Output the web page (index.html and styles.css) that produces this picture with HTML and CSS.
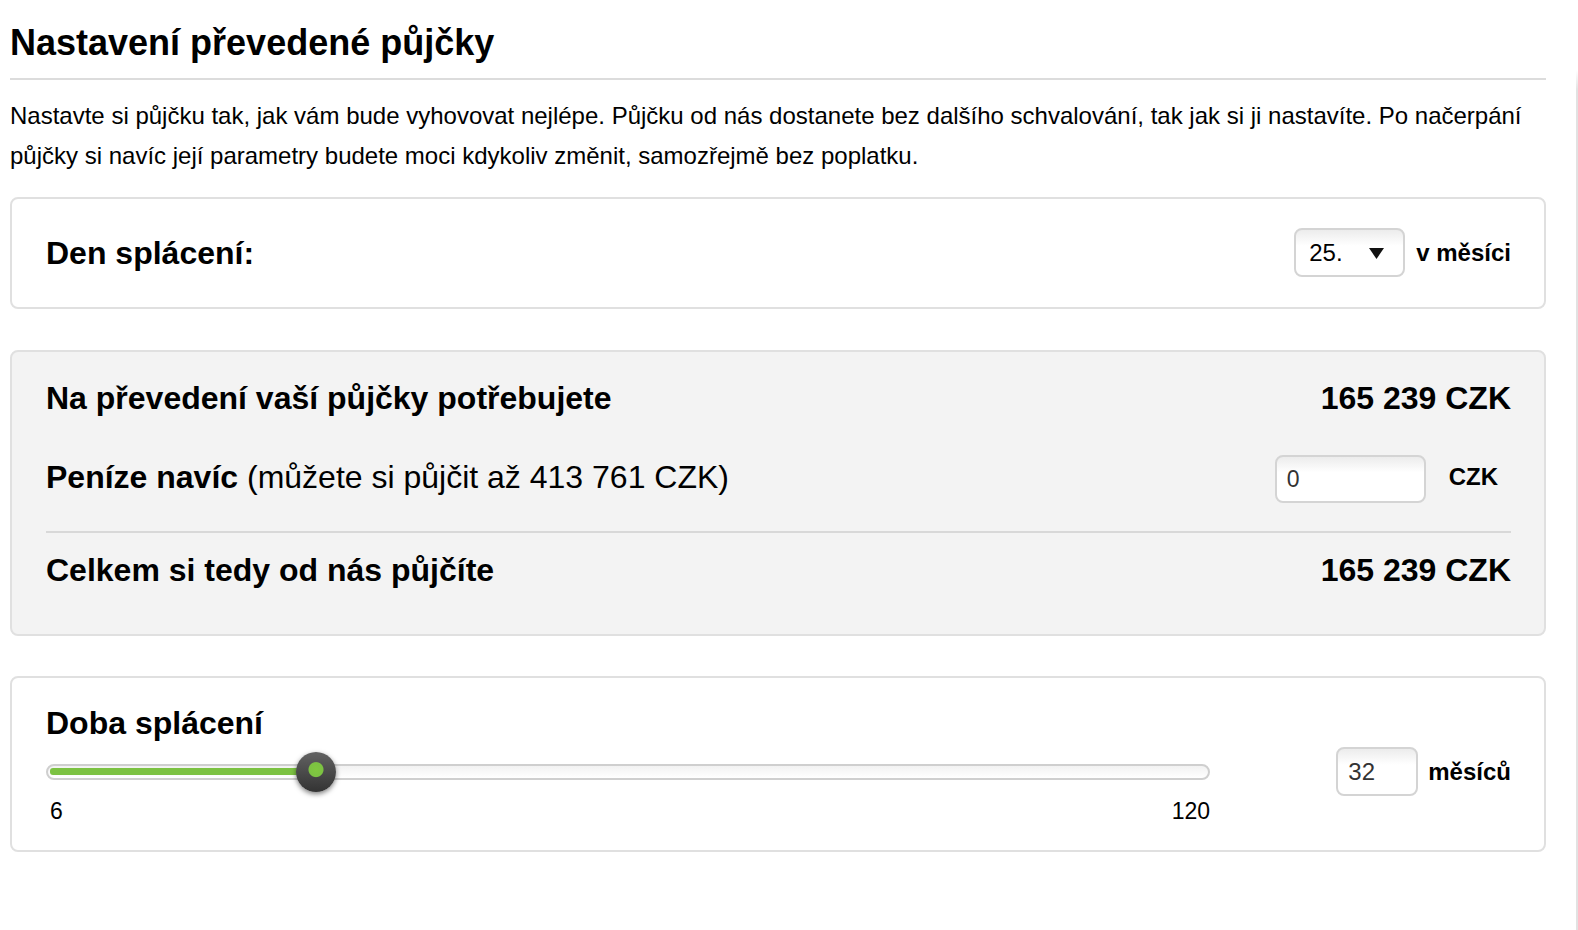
FILE: index.html
```html
<!DOCTYPE html>
<html lang="cs">
<head>
    <meta charset="UTF-8">
    <meta name="viewport" content="width=device-width, initial-scale=1.0">
    <title>Nastavení převedené půjčky</title>
    <link rel="stylesheet" href="styles.css">
</head>
<body>
    <div class="page">
        <main class="content">
            <h1 class="page-title">Nastavení převedené půjčky</h1>
            <p class="intro">Nastavte si půjčku tak, jak vám bude vyhovovat nejlépe. Půjčku od nás dostanete bez dalšího schvalování, tak jak si ji nastavíte. Po načerpání půjčky si navíc její parametry budete moci kdykoliv změnit, samozřejmě bez poplatku.</p>

            <section class="card card-day">
                <div class="row">
                    <span class="label">Den splácení:</span>
                    <div class="pick">
                        <div class="select">
                            <span>25.</span>
                            <svg width="15" height="11" viewBox="0 0 15 11"><path d="M0 0 H15 L7.5 11 Z" fill="#111"/></svg>
                        </div>
                        <span class="unit">v měsíci</span>
                    </div>
                </div>
            </section>

            <section class="card card-sum">
                <div class="row row-need">
                    <span class="label">Na převedení vaší půjčky potřebujete</span>
                    <span class="label">165 239 CZK</span>
                </div>
                <div class="row row-extra">
                    <span class="label">Peníze navíc <span class="note">(můžete si půjčit až 413 761 CZK)</span></span>
                    <div class="pick">
                        <input class="field field-money" type="text" value="0">
                        <span class="unit unit-czk">CZK</span>
                    </div>
                </div>
                <div class="row row-total">
                    <span class="label">Celkem si tedy od nás půjčíte</span>
                    <span class="label">165 239 CZK</span>
                </div>
            </section>

            <section class="card card-term">
                <h2 class="label term-title">Doba splácení</h2>
                <div class="term-row">
                    <div class="slider">
                        <div class="track-wrap">
                            <div class="track">
                                <div class="fill" style="width: 22.8%;"></div>
                                <div class="thumb" style="left: 23.1%;"></div>
                            </div>
                        </div>
                        <div class="scale">
                            <span>6</span>
                            <span>120</span>
                        </div>
                    </div>
                    <div class="pick term-pick">
                        <input class="field field-term" type="text" value="32">
                        <span class="unit">měsíců</span>
                    </div>
                </div>
            </section>
        </main>
        <div class="edge"></div>
    </div>
</body>
</html>
```

FILE: styles.css
```css
body {
    font-family: 'Liberation Sans', Arial, sans-serif;
    margin: 0;
    padding: 0;
    background-color: #fff;
    color: #000;
}

.page {
    display: flex;
    min-height: 930px;
}

.content {
    width: 1536px;
    margin-left: 10px;
}

.edge {
    margin-left: auto;
    margin-top: 70px;
    width: 2px;
    background: linear-gradient(#fff, #e2e2e2 20px);
}

.page-title {
    margin: 0;
    padding: 23px 0 15px;
    font-size: 36px;
    line-height: 40px;
    font-weight: bold;
    border-bottom: 2px solid #dcdcdc;
}

.intro {
    margin: 16px 0 21px;
    font-size: 24px;
    line-height: 40px;
}

.card {
    border: 2px solid #e0e0e0;
    border-radius: 8px;
    padding: 0 33px 0 34px;
    background-color: #fff;
}

.row {
    display: flex;
    justify-content: space-between;
    align-items: center;
}

.label {
    font-size: 32px;
    line-height: 40px;
    font-weight: bold;
    margin: 0;
}

.note {
    font-weight: normal;
}

.pick {
    display: flex;
    align-items: center;
}

.unit {
    font-size: 24px;
    font-weight: bold;
}

/* den splaceni */
.card-day {
    padding-top: 29px;
    padding-bottom: 30px;
}

.card-day .row {
    height: 49px;
}

.select {
    box-sizing: border-box;
    width: 111px;
    height: 49px;
    display: flex;
    align-items: center;
    justify-content: space-between;
    padding: 0 19px 0 13px;
    margin-right: 11px;
    border: 2px solid #d4d4d4;
    border-radius: 8px;
    background: linear-gradient(#ececec, #fff 35%);
    font-size: 24px;
}

.select svg {
    margin-top: 2px;
}

/* castky */
.card-sum {
    margin-top: 41px;
    padding-top: 20px;
    padding-bottom: 38px;
    background-color: #f3f3f3;
}

.row-need,
.row-extra,
.row-total {
    height: 52px;
}

.row-extra {
    margin-top: 27px;
    padding-bottom: 28px;
    border-bottom: 2px solid #d8d8d8;
}

.row-total {
    margin-top: 11px;
}

.field {
    box-sizing: border-box;
    height: 48px;
    padding: 0 10px;
    border: 2px solid #d4d4d4;
    border-radius: 8px;
    background: linear-gradient(#ececec, #fff 35%);
    font-family: 'Liberation Sans', Arial, sans-serif;
    font-size: 23px;
    color: #333;
    outline: none;
}

.field-money {
    width: 151px;
    margin-top: 4px;
}

.unit-czk {
    margin-left: 23px;
    margin-right: 13px;
}

/* doba splaceni */
.card-term {
    margin-top: 40px;
    padding-top: 25px;
    padding-bottom: 26px;
}

.term-row {
    display: flex;
    align-items: flex-start;
    margin-top: 4px;
}

.slider {
    width: 1164px;
}

.track-wrap {
    height: 49px;
    display: flex;
    align-items: center;
}

.track {
    position: relative;
    box-sizing: border-box;
    width: 100%;
    height: 16px;
    border: 2px solid #cfcfcf;
    border-radius: 8px;
    background: linear-gradient(#f2f2f2, #fff);
}

.fill {
    height: 7px;
    margin: 2px 0 0 2px;
    border-radius: 3px;
    background-color: #7cc242;
}

.thumb {
    position: absolute;
    top: 50%;
    width: 40px;
    height: 40px;
    border-radius: 50%;
    transform: translate(-50%, -50%);
    background:
        radial-gradient(circle at 50% 44%, #80c83f 0, #7cc242 7px, transparent 8px),
        linear-gradient(#626262, #333);
    box-shadow: 0 2px 5px rgba(0, 0, 0, 0.5);
}

.scale {
    display: flex;
    justify-content: space-between;
    margin-top: 2px;
    padding-left: 4px;
    font-size: 23px;
    line-height: 26px;
}

.term-pick {
    margin-left: auto;
}

.field-term {
    width: 82px;
    height: 49px;
    margin-right: 10px;
    font-size: 24px;
}
```
